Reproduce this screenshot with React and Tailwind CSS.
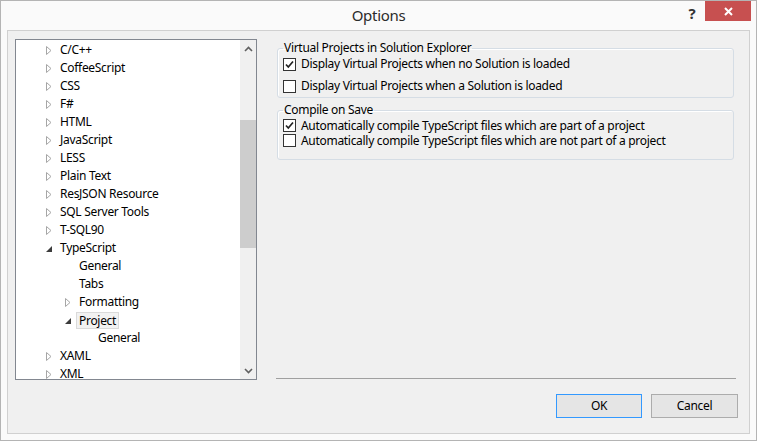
import React from "react";

const items = [
  { level: 0, label: "C/C++", state: "collapsed" },
  { level: 0, label: "CoffeeScript", state: "collapsed" },
  { level: 0, label: "CSS", state: "collapsed" },
  { level: 0, label: "F#", state: "collapsed" },
  { level: 0, label: "HTML", state: "collapsed" },
  { level: 0, label: "JavaScript", state: "collapsed" },
  { level: 0, label: "LESS", state: "collapsed" },
  { level: 0, label: "Plain Text", state: "collapsed" },
  { level: 0, label: "ResJSON Resource", state: "collapsed" },
  { level: 0, label: "SQL Server Tools", state: "collapsed" },
  { level: 0, label: "T-SQL90", state: "collapsed" },
  { level: 0, label: "TypeScript", state: "expanded" },
  { level: 1, label: "General", state: "leaf" },
  { level: 1, label: "Tabs", state: "leaf" },
  { level: 1, label: "Formatting", state: "collapsed" },
  { level: 1, label: "Project", state: "expanded", selected: true },
  { level: 2, label: "General", state: "leaf" },
  { level: 0, label: "XAML", state: "collapsed" },
  { level: 0, label: "XML", state: "collapsed" },
];

const indents = ["pl-[30px]", "pl-[49px]", "pl-[68px]"];

function Collapsed() {
  return (
    <svg width="6" height="9" viewBox="0 0 6 9">
      <path d="M0.5 0.5 L5 4.5 L0.5 8.5 Z" fill="none" stroke="#a6a6a6" strokeWidth="1" />
    </svg>
  );
}

function Expanded() {
  return (
    <svg width="6" height="6" viewBox="0 0 6 6" className="mt-[2px]">
      <path d="M6 0 L6 6 L0 6 Z" fill="#3c3c3c" />
    </svg>
  );
}

function TreeRow({ level, label, state, selected }) {
  return (
    <div className={`h-[18px] shrink-0 flex items-center ${indents[level]}`}>
      <span className="w-[14px] h-[18px] flex items-center">
        {state === "collapsed" && <Collapsed />}
        {state === "expanded" && <Expanded />}
      </span>
      {selected ? (
        <span className="h-[17px] ml-[-3px] px-[2px] border border-[#dadada] bg-[#f2f2f2] leading-[15px]">
          {label}
        </span>
      ) : (
        <span className="leading-[18px] whitespace-nowrap">{label}</span>
      )}
    </div>
  );
}

function Chevron({ down }) {
  return (
    <svg width="9" height="6" viewBox="0 0 9 6">
      <path
        d={down ? "M1 1 L4.5 4.5 L8 1" : "M1 5 L4.5 1.5 L8 5"}
        fill="none"
        stroke="#606060"
        strokeWidth="1.6"
      />
    </svg>
  );
}

function Checkbox({ checked }) {
  return (
    <span className="w-[13px] h-[13px] shrink-0 border border-[#333333] bg-white flex items-center justify-center">
      {checked && (
        <svg width="11" height="11" viewBox="0 0 11 11">
          <path d="M2 5.5 L4.3 8 L9 2.5" fill="none" stroke="#222" strokeWidth="1.7" />
        </svg>
      )}
    </span>
  );
}

function Option({ checked, label, className = "" }) {
  return (
    <div className={`flex items-center gap-[5px] ${className}`}>
      <Checkbox checked={checked} />
      <span className="whitespace-nowrap">{label}</span>
    </div>
  );
}

export default function App() {
  return (
    <div className="w-[757px] h-[441px] border border-[#b4b4b4] bg-[#fafafa] flex flex-col font-['Segoe_UI','Noto_Sans',sans-serif] text-[12px] tracking-[-0.3px] text-black overflow-hidden">
      {/* Title bar */}
      <div className="h-[29px] shrink-0 grid grid-cols-[1fr_auto_1fr]">
        <div />
        <div className="flex items-center text-[15px] text-[#2b2b2b] pb-[1px]">Options</div>
        <div className="flex justify-end items-start pr-[5px]">
          <div className="w-[26px] h-[20px] flex items-center justify-center text-[15px] font-bold text-[#333] pt-[4px]">
            ?
          </div>
          <div className="w-[46px] h-[20px] bg-[#c75050] flex items-center justify-center">
            <svg width="9" height="9" viewBox="0 0 9 9">
              <path d="M1 1 L8 8 M8 1 L1 8" stroke="#fff" strokeWidth="2" />
            </svg>
          </div>
        </div>
      </div>

      {/* Client area */}
      <div className="mx-[6px] h-[404px] border border-[#d0d0d0] bg-[#f0f0f0] flex flex-col pl-[7px] pt-[8px]">
        <div className="flex h-[341px]">
          {/* Tree */}
          <div className="w-[242px] h-[341px] border border-[#828790] bg-white flex">
            <div className="flex-1 flex flex-col overflow-hidden pt-[1px]">
              {items.map((it, i) => (
                <TreeRow key={i} {...it} />
              ))}
            </div>
            <div className="w-[16px] bg-[#f0f0f0] flex flex-col">
              <div className="h-[17px] flex items-center justify-center">
                <Chevron />
              </div>
              <div className="flex-1">
                <div className="mt-[63px] h-[128px] bg-[#cdcdcd]" />
              </div>
              <div className="h-[17px] flex items-center justify-center">
                <Chevron down />
              </div>
            </div>
          </div>

          {/* Right panel */}
          <div className="flex-1 ml-[19px] mr-[13px] flex flex-col">
            <fieldset className="mt-[1px] ml-[1px] mr-[2px] border border-[#d5dde5] rounded-[3px] pl-[5px] pb-[3px] shadow-[inset_1px_1px_0_#ffffff]">
              <legend className="px-[1px] leading-[16px]">Virtual Projects in Solution Explorer</legend>
              <Option checked label="Display Virtual Projects when no Solution is loaded" className="h-[16px]" />
              <Option label="Display Virtual Projects when a Solution is loaded" className="h-[16px] mt-[6px]" />
            </fieldset>
            <fieldset className="mt-[4px] ml-[1px] mr-[2px] border border-[#d5dde5] rounded-[3px] pl-[5px] pb-[11px] shadow-[inset_1px_1px_0_#ffffff]">
              <legend className="px-[1px] leading-[16px]">Compile on Save</legend>
              <Option
                checked
                label="Automatically compile TypeScript files which are part of a project"
                className="h-[15px] leading-[15px]"
              />
              <Option
                label="Automatically compile TypeScript files which are not part of a project"
                className="h-[15px] leading-[15px]"
              />
            </fieldset>
            <div className="mt-auto mb-[1px] h-[1px] bg-[#a0a0a0]" />
          </div>
        </div>

        {/* Buttons */}
        <div className="mt-[14px] flex justify-end gap-[9px] pr-[11px]">
          <button className="w-[86px] h-[24px] border border-[#3399ff] bg-[#e5e5e5] text-[12px]">OK</button>
          <button className="w-[87px] h-[24px] border border-[#acacac] bg-[#e5e5e5] text-[12px]">Cancel</button>
        </div>
      </div>
    </div>
  );
}
